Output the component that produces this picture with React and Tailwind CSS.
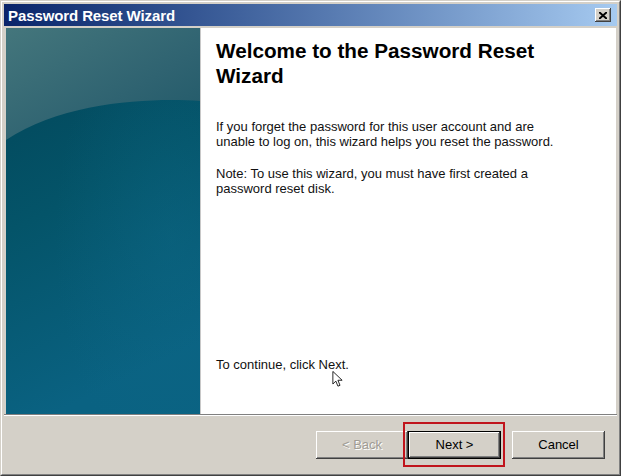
import React from "react";

function LeftArt() {
  return (
    <svg width="194" height="386" viewBox="0 0 194 386" className="block">
      <defs>
        <linearGradient id="lowg" x1="0" y1="0" x2="0.25" y2="1">
          <stop offset="0" stopColor="#024457" />
          <stop offset="0.5" stopColor="#045469" />
          <stop offset="1" stopColor="#0a6282" />
        </linearGradient>
        <linearGradient id="topg" x1="0" y1="0" x2="1" y2="1">
          <stop offset="0" stopColor="#44767c" />
          <stop offset="0.6" stopColor="#2f6371" />
          <stop offset="1" stopColor="#1f5868" />
        </linearGradient>
        <radialGradient id="glow" cx="0.85" cy="0.55" r="0.6">
          <stop offset="0" stopColor="#0e6a88" stopOpacity="0.35" />
          <stop offset="1" stopColor="#0e6a88" stopOpacity="0" />
        </radialGradient>
      </defs>
      <rect width="194" height="386" fill="url(#lowg)" />
      <rect width="194" height="386" fill="url(#glow)" />
      <path d="M0 0 H194 V73 C150 70 60 72 0 112 Z" fill="url(#topg)" />
    </svg>
  );
}

function Cursor() {
  return (
    <svg width="11" height="16" viewBox="0 0 12 19" className="block">
      <path
        d="M0.5 0.5 L0.5 15.5 L4 12 L6.5 18 L9 17 L6.5 11 L11.5 11 Z"
        fill="#ffffff"
        stroke="#000000"
        strokeWidth="1"
        strokeLinejoin="round"
      />
    </svg>
  );
}

export default function App() {
  return (
    <div
      className="w-[621px] h-[476px] bg-[#d4d0c8] border border-t-[#d4d0c8] border-l-[#d4d0c8] border-r-[#404040] border-b-[#404040] overflow-hidden"
      style={{ fontFamily: '"Liberation Sans", Arial, sans-serif' }}
    >
      <div className="h-full flex flex-col border border-t-white border-l-white border-r-[#808080] border-b-[#808080] p-[2px]">
        {/* Title bar */}
        <div className="h-[22px] shrink-0 flex items-center justify-between bg-gradient-to-r from-[#0a246a] to-[#a6caf0] pl-[4px] pr-[6px]">
          <span className="text-white font-bold text-[15px] leading-none tracking-[-0.1px]">
            Password Reset Wizard
          </span>
          <div className="w-[16px] h-[14px] bg-[#d4d0c8] flex items-center justify-center shadow-[inset_-1px_-1px_#404040,inset_1px_1px_#ffffff,inset_-2px_-2px_#808080]">
            <svg width="8" height="7" viewBox="0 0 8 7">
              <path d="M0 0 L8 7 M8 0 L0 7" stroke="#000" strokeWidth="2" />
            </svg>
          </div>
        </div>

        {/* Body */}
        <div className="mt-[2px] ml-[2px] mr-[1px] h-[386px] shrink-0 flex">
          <div className="w-[194px] shrink-0">
            <LeftArt />
          </div>
          <div className="w-px bg-[#c8c8c8] shrink-0" />
          <div className="relative flex-1 bg-white flex flex-col pl-[15px] pt-[9.5px] pb-[42px] text-[#111]">
            <h1 className="font-bold text-[20.7px] leading-[25px] text-black">
              Welcome to the Password Reset
              <br />
              Wizard
            </h1>
            <p className="mt-[31px] text-[13px] leading-[15px]">
              If you forget the password for this user account and are
              <br />
              unable to log on, this wizard helps you reset the password.
            </p>
            <p className="mt-[17.5px] text-[13px] leading-[15px]">
              Note: To use this wizard, you must have first created a
              <br />
              password reset disk.
            </p>
            <p className="mt-auto text-[13px] leading-[15px]">To continue, click Next.</p>
            <div className="absolute left-[131px] top-[343px]">
              <Cursor />
            </div>
          </div>
        </div>

        {/* Separator */}
        <div className="h-px bg-[#808080] shrink-0" />
        <div className="h-px bg-white shrink-0" />

        {/* Buttons */}
        <div className="relative flex-1 flex items-start justify-end pt-[15px] pr-[12px]">
          <div className="w-[92px] h-[28px] flex items-center justify-center bg-[#d4d0c8] shadow-[inset_-1px_-1px_#404040,inset_1px_1px_#ffffff,inset_-2px_-2px_#808080] text-[13px] text-[#a09c94] [text-shadow:1px_1px_0_#ffffff]">
            &lt; Back
          </div>
          <div className="w-[93px] h-[28px] flex items-center justify-center bg-[#d4d0c8] border border-black shadow-[inset_-1px_-1px_#404040,inset_1px_1px_#ffffff,inset_-2px_-2px_#808080] text-[13px] text-black">
            Next &gt;
          </div>
          <div className="w-[93px] h-[28px] ml-[11px] flex items-center justify-center bg-[#d4d0c8] shadow-[inset_-1px_-1px_#404040,inset_1px_1px_#ffffff,inset_-2px_-2px_#808080] text-[13px] text-black">
            Cancel
          </div>
          <div className="absolute left-[399px] top-[6px] w-[102px] h-[45px] border-2 border-[#c0141c]" />
        </div>
      </div>
    </div>
  );
}
